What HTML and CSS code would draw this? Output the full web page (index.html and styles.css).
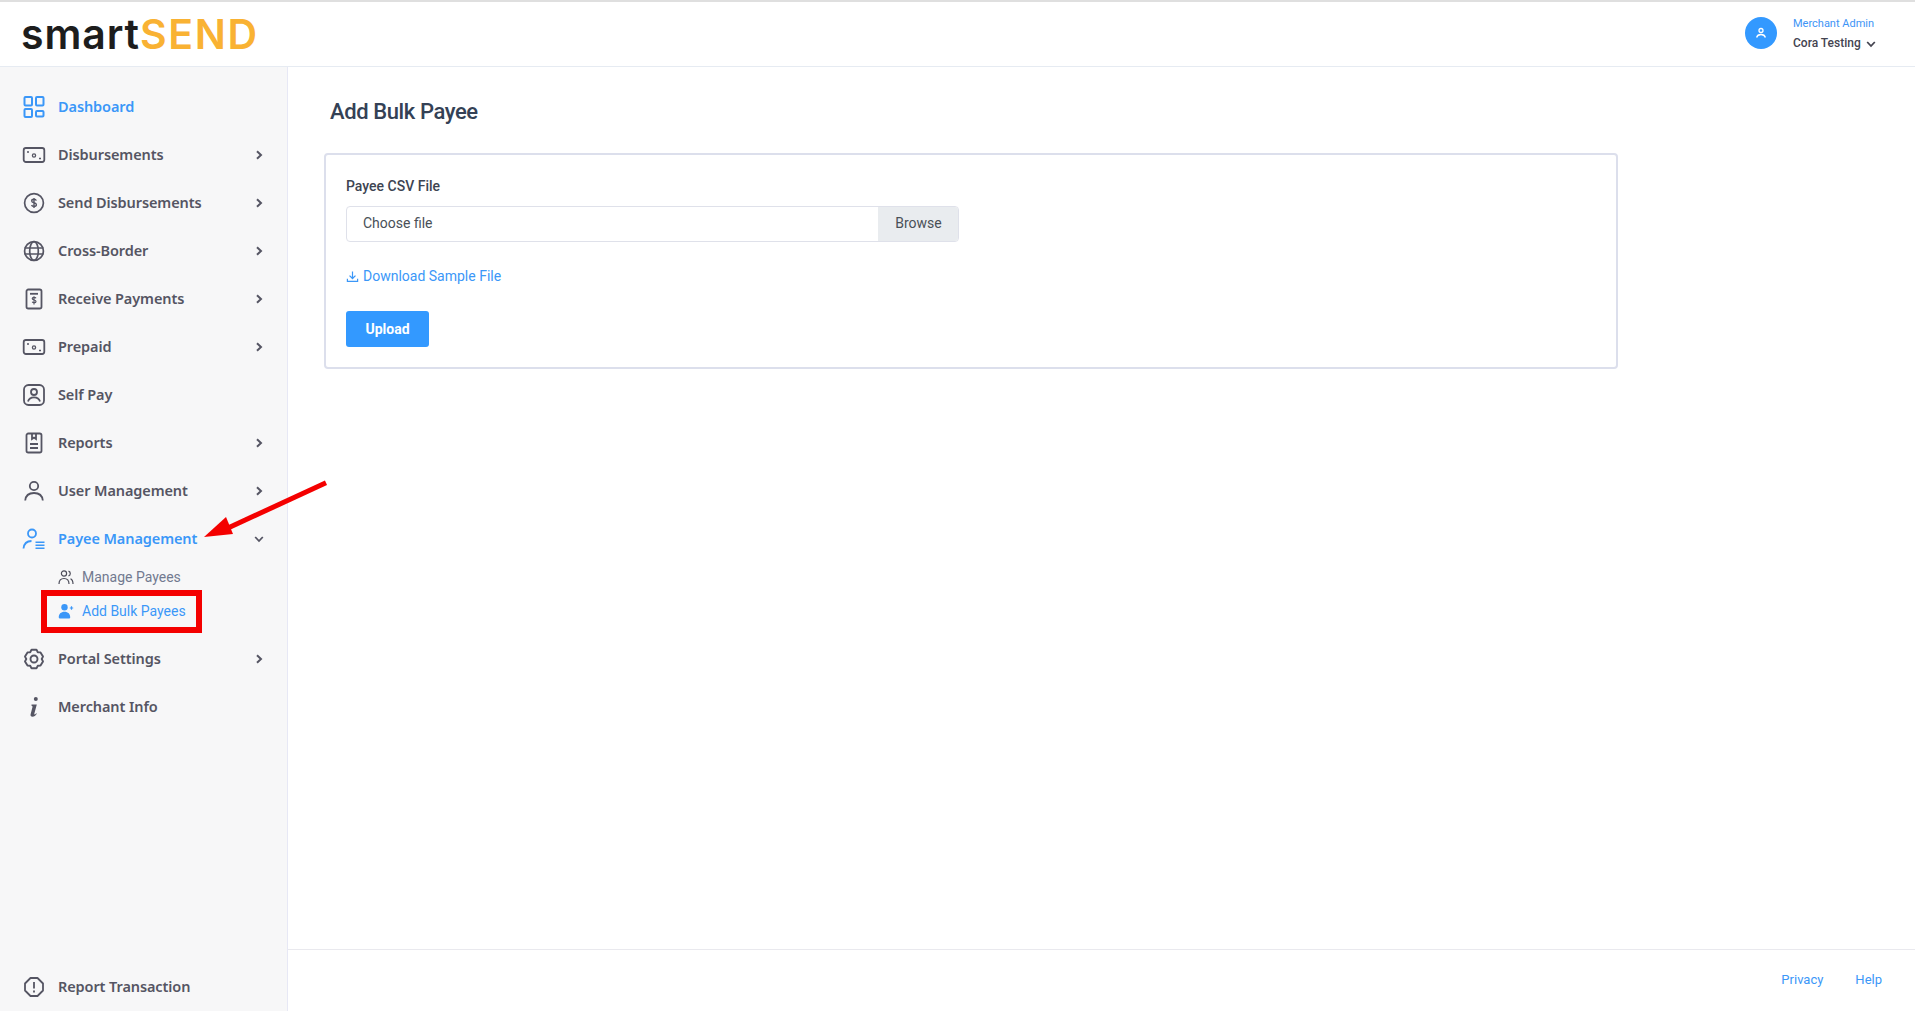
FILE: index.html
```html
<!DOCTYPE html>
<html lang="en">
<head>
<meta charset="utf-8">
<title>Add Bulk Payee</title>
<link rel="stylesheet" href="styles.css">
</head>
<body>
<svg class="defs" width="0" height="0" aria-hidden="true">
  <symbol id="chev-r" viewBox="0 0 10 10"><path d="M3 1.200 7 5 3 8.800" fill="none" stroke="currentColor" stroke-width="2"/></symbol>
  <symbol id="chev-d" viewBox="0 0 10 10"><path d="M1.200 3 5 7 8.800 3" fill="none" stroke="currentColor" stroke-width="1.800"/></symbol>
  <symbol id="cash" viewBox="0 0 24 24"><rect x="1.700" y="5" width="20.600" height="14" rx="2.200" fill="none" stroke="currentColor" stroke-width="1.800"/><circle cx="12" cy="12.500" r="1.600" fill="none" stroke="currentColor" stroke-width="1.300"/><path d="M5 9h2M17 15.500h2" stroke="currentColor" stroke-width="1.500"/></symbol>
</svg>
<div class="app">
  <header class="topbar">
    <div class="logo">smart<span class="logo-send">SEND</span></div>
    <div class="account">
      <span class="avatar"><svg viewBox="0 0 16 16" width="16" height="16"><circle cx="8" cy="5.500" r="2" fill="none" stroke="#fff" stroke-width="1.300"/><path d="M3.600 12.500c.6-2.200 2.400-3 4.400-3s3.800.8 4.400 3" fill="none" stroke="#fff" stroke-width="1.300"/></svg></span>
      <div class="account-text">
        <div class="account-role">Merchant Admin</div>
        <div class="account-name">Cora Testing <svg class="account-chev" width="10" height="10"><use href="#chev-d"/></svg></div>
      </div>
    </div>
  </header>
  <div class="body-row">
    <aside class="sidebar">
      <nav class="menu">
        <a class="item active"><span class="ico"><svg viewBox="0 0 24 24" width="24" height="24" fill="none" stroke="currentColor" stroke-width="2"><rect x="2.500" y="2" width="7.500" height="8.500" rx="1"/><rect x="14" y="2" width="7.500" height="8.500" rx="1"/><rect x="2.500" y="14" width="7.500" height="8" rx="1"/><rect x="14" y="16" width="7.500" height="5.500" rx="1"/></svg></span><span class="label">Dashboard</span></a>
        <a class="item"><span class="ico"><svg width="24" height="24"><use href="#cash"/></svg></span><span class="label">Disbursements</span><svg class="chev" width="10" height="10"><use href="#chev-r"/></svg></a>
        <a class="item"><span class="ico"><svg viewBox="0 0 24 24" width="24" height="24"><circle cx="12" cy="12" r="9.400" fill="none" stroke="currentColor" stroke-width="1.700"/><path d="M14.300 9.600c-.3-.9-1.200-1.300-2.300-1.300-1.300 0-2.300.6-2.300 1.700s1 1.500 2.300 1.800 2.400.8 2.400 1.900-1 1.700-2.400 1.700c-1.200 0-2.100-.5-2.400-1.400M12 7v10" fill="none" stroke="currentColor" stroke-width="1.400"/></svg></span><span class="label">Send Disbursements</span><svg class="chev" width="10" height="10"><use href="#chev-r"/></svg></a>
        <a class="item"><span class="ico"><svg viewBox="0 0 24 24" width="24" height="24" fill="none" stroke="currentColor" stroke-width="1.700"><circle cx="12" cy="12" r="9.400"/><ellipse cx="12" cy="12" rx="4.300" ry="9.400"/><path d="M2.600 9h18.800M2.600 15h18.800"/></svg></span><span class="label">Cross-Border</span><svg class="chev" width="10" height="10"><use href="#chev-r"/></svg></a>
        <a class="item"><span class="ico"><svg viewBox="0 0 24 24" width="24" height="24" fill="none" stroke="currentColor" stroke-width="1.800"><rect x="4.500" y="2.500" width="15" height="19" rx="1.800"/><path d="M8 6.800h8"/><path d="M14 11.200c-.3-.6-1-.9-1.900-.9-1 0-1.900.5-1.900 1.300s.9 1.200 1.900 1.400 1.900.6 1.900 1.400-.9 1.300-1.900 1.300c-.9 0-1.600-.3-1.900-.9M12 9.200v8.200" stroke-width="1.200"/></svg></span><span class="label">Receive Payments</span><svg class="chev" width="10" height="10"><use href="#chev-r"/></svg></a>
        <a class="item"><span class="ico"><svg width="24" height="24"><use href="#cash"/></svg></span><span class="label">Prepaid</span><svg class="chev" width="10" height="10"><use href="#chev-r"/></svg></a>
        <a class="item"><span class="ico"><svg viewBox="0 0 24 24" width="24" height="24" fill="none" stroke="currentColor" stroke-width="1.800"><rect x="2" y="2" width="20" height="20" rx="4.500"/><circle cx="12" cy="9" r="3"/><path d="M6 18.500c.8-3 3.200-4.200 6-4.200s5.200 1.200 6 4.200"/></svg></span><span class="label">Self Pay</span></a>
        <a class="item"><span class="ico"><svg viewBox="0 0 24 24" width="24" height="24" fill="none" stroke="currentColor" stroke-width="1.800"><rect x="4.500" y="2.500" width="15" height="19" rx="1.800"/><path d="M10 2.500v5.500l2-1.500 2 1.500V2.500M8 13h8M8 17h8"/></svg></span><span class="label">Reports</span><svg class="chev" width="10" height="10"><use href="#chev-r"/></svg></a>
        <a class="item"><span class="ico"><svg viewBox="0 0 24 24" width="24" height="24" fill="none" stroke="currentColor" stroke-width="1.800"><circle cx="12" cy="7" r="4.200"/><path d="M3.200 21.500c.5-5 4.200-7.500 8.800-7.500s8.300 2.500 8.800 7.500"/></svg></span><span class="label">User Management</span><svg class="chev" width="10" height="10"><use href="#chev-r"/></svg></a>
        <a class="item active"><span class="ico"><svg viewBox="0 0 24 24" width="24" height="24" fill="none" stroke="currentColor" stroke-width="1.800"><circle cx="10" cy="6.500" r="4"/><path d="M1.500 21.500C2 17 5 14 9.500 14"/><path d="M13.500 15.200h9M13.500 18.200h9M13.500 21.200h9" stroke-width="1.400"/></svg></span><span class="label">Payee Management</span><svg class="chev chev-open" width="10" height="10"><use href="#chev-d"/></svg></a>
        <div class="submenu">
          <a class="subitem"><svg viewBox="0 0 16 16" width="16" height="16" fill="none" stroke="#4d4d5a" stroke-width="1.200"><circle cx="6" cy="4.500" r="2.600"/><path d="M1 15c0-3.800 2.200-5.500 5-5.500s5 1.700 5 5.500"/><path d="M10.500 2.100a2.500 2.500 0 0 1 0 4.800M12.500 9.800c1.600.7 2.500 2.500 2.500 5.200"/></svg><span>Manage Payees</span></a>
          <a class="subitem current"><svg viewBox="0 0 16 16" width="16" height="16" fill="currentColor"><circle cx="6.500" cy="4.200" r="3.200"/><path d="M.8 14.800c-.3-3.700 2.200-6 5.700-6s6 2.300 5.700 6c-.1.500-.5.800-1 .8H1.800c-.5 0-.9-.3-1-.8z"/><path d="M13.500 3.300v3.400M11.800 5h3.400" stroke="currentColor" stroke-width="1.200"/></svg><span>Add Bulk Payees</span></a>
        </div>
        <a class="item"><span class="ico"><svg viewBox="0 0 24 24" width="24" height="24" fill="none" stroke="currentColor" stroke-width="1.900"><path d="M9.500 2.800h5l1.300 2.400 2.700.2 2.500 4.200-1.300 2.400 1.300 2.400-2.500 4.200-2.700.2-1.300 2.400h-5l-1.300-2.400-2.700-.2-2.500-4.200L4.300 12 3 9.600l2.500-4.200 2.700-.2z" stroke-linejoin="round"/><circle cx="12" cy="12" r="3.500"/></svg></span><span class="label">Portal Settings</span><svg class="chev" width="10" height="10"><use href="#chev-r"/></svg></a>
        <a class="item"><span class="ico"><svg viewBox="0 0 24 24" width="24" height="24" fill="currentColor"><circle cx="13.800" cy="4" r="2"/><path d="M9.500 9.500h5.300l-2.500 9.300c-.2.700.5.900 1 .4l.9-.9.600.5c-1.200 1.900-2.700 3-4.300 3-1.500 0-2.300-1-1.900-2.500l1.900-7.300c.1-.6-.2-.8-.9-.9z"/></svg></span><span class="label">Merchant Info</span></a>
      </nav>
      <a class="item"><span class="ico"><svg viewBox="0 0 24 24" width="24" height="24" fill="none" stroke="currentColor" stroke-width="1.800"><path d="M8.500 3h7l5.500 5.500v7L15.500 21h-7L3 15.500v-7z" stroke-linejoin="round"/><path d="M12 7v6.500M12 15.500v2"/></svg></span><span class="label">Report Transaction</span></a>
    </aside>
    <main class="main">
      <div class="content">
        <h1 class="title">Add Bulk Payee</h1>
        <section class="card">
          <div class="field-label">Payee CSV File</div>
          <div class="file-input"><span class="file-name">Choose file</span><span class="file-browse">Browse</span></div>
          <a class="download"><svg viewBox="0 0 14 14" width="13" height="13" fill="none" stroke="currentColor" stroke-width="1.300"><path d="M7 1.500v7.500M3.800 6 7 9.200 10.200 6M1.500 9.500v2.800h11V9.500"/></svg><span>Download Sample File</span></a>
          <button class="upload" type="button">Upload</button>
        </section>
      </div>
      <footer class="footer"><a>Privacy</a><a>Help</a></footer>
    </main>
  </div>
  <div class="redbox"></div>
  <svg class="arrow" width="130" height="64" viewBox="0 0 130 64"><path d="M122 3.800 24 49" stroke="#f40000" stroke-width="5" fill="none"/><path d="M0 58 22 38 29 55z" fill="#f40000"/></svg>
</div>
</body>
</html>
```

FILE: styles.css
```css
* { box-sizing: border-box; }
html, body { margin: 0; height: 100%; }
body { font-family: Roboto, "Liberation Sans", sans-serif; color: #343a40; background: #fff; overflow: hidden; }
a { color: inherit; text-decoration: none; }
.defs { position: absolute; }
.app { position: relative; display: flex; flex-direction: column; height: 1011px; }

.topbar { height: 67px; flex: none; display: flex; align-items: center; justify-content: space-between; border-top: 2px solid #dfdfdf; border-bottom: 1px solid #e6ebf2; padding: 0 34px 0 21px; }
.logo { font-family: Inter, Lato, sans-serif; font-size: 41px; line-height: 48px; font-weight: 600; color: #1d1d1d; letter-spacing: .9px; }
.logo-send { color: #f9b233; letter-spacing: 1.6px; }
.account { display: flex; align-items: center; gap: 16px; margin-bottom: 2px; }
.avatar { width: 32px; height: 32px; border-radius: 50%; background: #3399ff; display: flex; align-items: center; justify-content: center; }
.account-text { width: 88px; padding-top: 2px; }
.account-role { font-size: 11px; line-height: 14px; color: #3d94f6; margin-bottom: 4px; }
.account-name { font-size: 12px; line-height: 16px; font-weight: 500; color: #444450; white-space: nowrap; }
.account-chev { margin-left: 2px; vertical-align: -2px; }

.body-row { flex: 1; display: flex; min-height: 0; }
.sidebar { width: 288px; flex: none; display: flex; flex-direction: column; justify-content: space-between; background: #f7f7f8; border-right: 1px solid #e7e8f5; padding-top: 16px; }
.menu { display: flex; flex-direction: column; }
.item { height: 48px; display: flex; align-items: center; padding: 0 23px 0 22px; color: #555563; font-family: "Noto Sans", "Open Sans", sans-serif; font-size: 14.5px; font-weight: 600; letter-spacing: -.1px; }
.item.active { color: #3b97f8; }
.ico { width: 24px; height: 24px; margin-right: 12px; flex: none; display: flex; }
.label { flex: 1; white-space: nowrap; padding-bottom: 2px; }
.chev { flex: none; }
.chev-open { color: #555563; }

.submenu { display: flex; flex-direction: column; gap: 6px; padding-bottom: 10px; }
.subitem { height: 28px; display: flex; align-items: center; gap: 8px; padding-left: 58px; font-size: 14px; color: #727a90; }
.subitem.current { color: #3b97f8; }

.main { flex: 1; display: flex; flex-direction: column; min-width: 0; }
.content { flex: 1; padding: 31px 0 0 36px; }
.title { margin: 0 0 27px 6px; font-size: 22px; line-height: 28px; font-weight: 500; color: #344155; letter-spacing: -.4px; }
.card { width: 1294px; height: 216px; border: 2px solid #dcdfec; border-radius: 4px; padding: 21px 20px 20px; display: flex; flex-direction: column; align-items: flex-start; }
.field-label { font-size: 14px; line-height: 20px; font-weight: 500; color: #3d4452; margin-bottom: 10px; }
.file-input { width: 613px; height: 36px; display: flex; border: 1px solid #dfe1ea; border-radius: 4px; font-size: 14px; overflow: hidden; }
.file-name { flex: 1; line-height: 33px; padding-left: 16px; color: #495057; }
.file-browse { width: 80px; line-height: 33px; text-align: center; background: #e9ecef; color: #495057; padding-left: 1px; }
.download { display: flex; align-items: center; gap: 4px; margin-top: 25px; height: 20px; font-size: 14px; color: #3b97f8; }
.upload { margin-top: 25px; width: 83px; height: 36px; border: 0; border-radius: 3px; background: #3399ff; color: #fff; font-family: Roboto, sans-serif; font-size: 14px; font-weight: 700; }

.footer { height: 62px; flex: none; border-top: 1px solid #e9e9ee; display: flex; justify-content: flex-end; align-items: center; gap: 32px; padding: 0 33px 2px 0; font-size: 13px; color: #3b97f8; }

.redbox { position: absolute; left: 41px; top: 590px; width: 161px; height: 43px; border: 6px solid #f40000; }
.arrow { position: absolute; left: 204px; top: 479px; }
```
